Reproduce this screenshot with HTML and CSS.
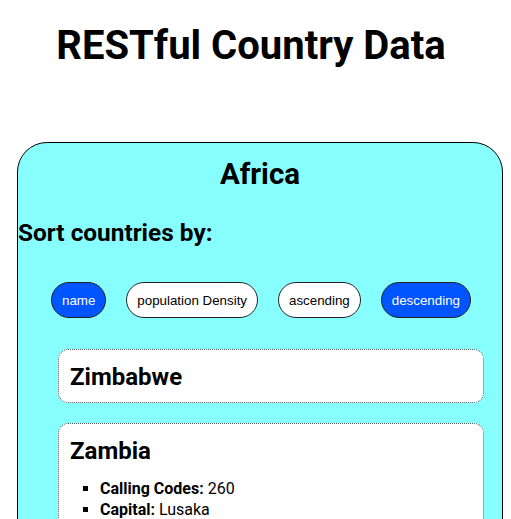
FILE: index.html
```html
<!DOCTYPE html>
<html>
<head>
<meta charset="utf-8">
<link rel="stylesheet" href="styles.css">
</head>
<body>
<h1 class="title">RESTful Country Data</h1>
<section class="region">
  <h2 class="region-name">Africa</h2>
  <h3 class="sort-label">Sort countries by:</h3>
  <div class="sort-buttons">
    <button class="pill active">name</button>
    <button class="pill">population Density</button>
    <button class="pill">ascending</button>
    <button class="pill active">descending</button>
  </div>
  <div class="country">
    <h3 class="country-name">Zimbabwe</h3>
  </div>
  <div class="country">
    <h3 class="country-name">Zambia</h3>
    <ul class="facts">
      <li><b>Calling Codes:</b> 260</li>
      <li><b>Capital:</b> Lusaka</li>
      <li><b>Region:</b> Africa</li>
    </ul>
  </div>
</section>
</body>
</html>
```
FILE: styles.css
```css
body {
  margin: 8px;
  font-family: Roboto, "Liberation Sans", sans-serif;
  color: #000;
  background: #fff;
}
.title {
  font-size: 40px;
  font-weight: 700;
  text-align: center;
  margin: 14px 9px 73px 0;
  line-height: 47px;
}
.region {
  margin-left: 9px;
  background: #88ffff;
  border: 1px solid #000;
  border-radius: 30px;
  padding-bottom: 20px;
}
.region-name {
  font-size: 29.5px;
  font-weight: 700;
  text-align: center;
  margin: 14px 0 0 0;
  line-height: 35px;
}
.sort-label {
  font-size: 24.4px;
  font-weight: 700;
  margin: 26px 0 0 0;
  line-height: 29px;
}
.sort-buttons {
  display: flex;
  gap: 20px;
  padding-left: 33px;
  margin-top: 35px;
}
.pill {
  font-family: "Liberation Sans", Arial, sans-serif;
  font-size: 13.333px;
  line-height: 14px;
  padding: 11px 10px 9px 10px;
  border: 1px solid #222;
  border-radius: 18px;
  background: #fff;
  color: #000;
}
.pill.active {
  background: #0055ff;
  color: #fff;
}
.country {
  margin: 31px 18px 0 40px;
  background: #fff;
  border: 1px dotted #555;
  border-radius: 10px;
  padding: 13px 11px 11px 11px;
}
.country + .country {
  margin-top: 20px;
}
.country-name {
  font-size: 24px;
  font-weight: 700;
  margin: 0;
  line-height: 28px;
}
.facts {
  list-style: square;
  margin: 12.5px 0 0 0;
  padding-left: 30px;
  font-size: 16px;
  line-height: 21px;
}
```
